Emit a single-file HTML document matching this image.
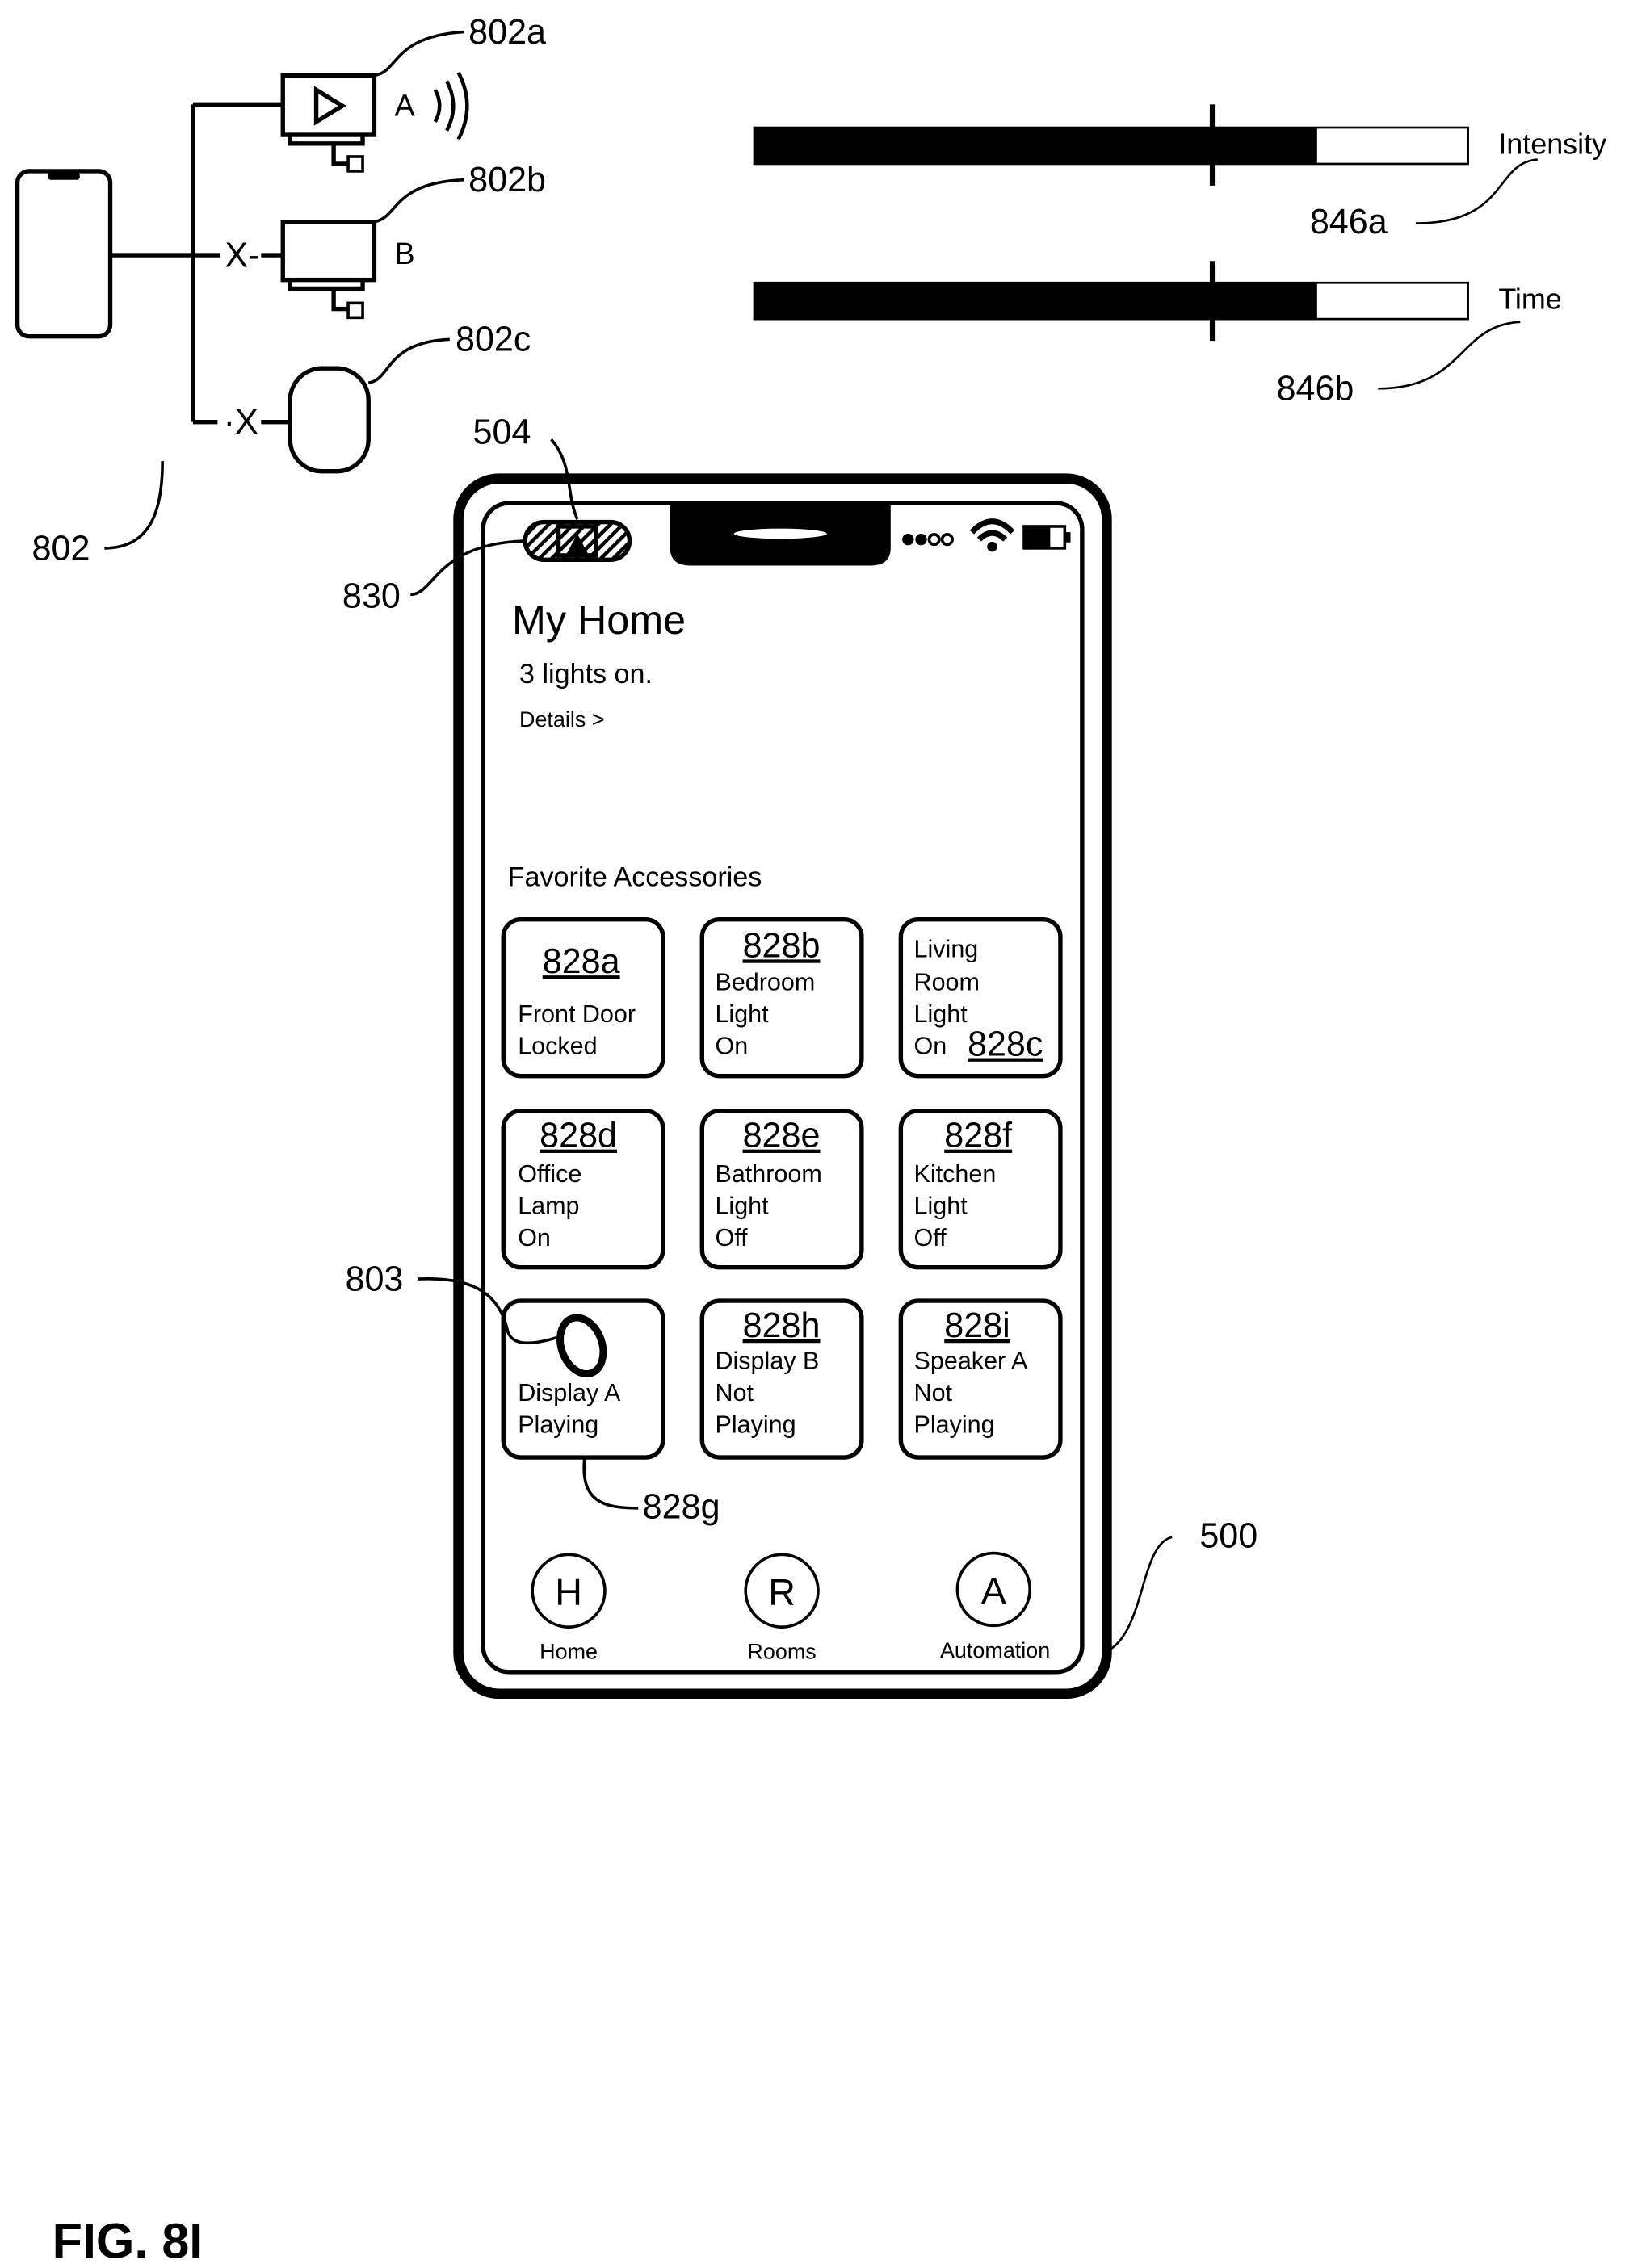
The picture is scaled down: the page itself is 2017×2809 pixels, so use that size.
<!DOCTYPE html>
<html><head><style>
html,body{margin:0;padding:0;background:#fff;}
svg{display:block;}
text{font-family:"Liberation Sans",sans-serif;fill:#000;}
</style></head><body>
<svg width="2017" height="2809" viewBox="0 0 1123 1564" xmlns="http://www.w3.org/2000/svg">
<defs>
<pattern id="h" width="6" height="6" patternUnits="userSpaceOnUse" patternTransform="rotate(45)">
<rect width="6" height="6" fill="#fff"/><rect width="2.5" height="6" fill="#000"/></pattern>
</defs>
<g fill="none" stroke="#000" stroke-width="3">
<rect x="12" y="118" width="64" height="114" rx="8"/>
<line x1="76" y1="176" x2="133" y2="176"/>
<line x1="133" y1="72" x2="133" y2="291"/>
<line x1="133" y1="72" x2="195" y2="72"/>
<line x1="133" y1="176" x2="152" y2="176"/>
<line x1="180" y1="176" x2="195" y2="176"/>
<line x1="133" y1="291" x2="150" y2="291"/>
<line x1="180" y1="291" x2="200" y2="291"/>
<rect x="195" y="52" width="63" height="41"/>
<path d="M200 93 v6 h50 v-6"/>
<path d="M230 99 v14 h10"/>
<rect x="240" y="108" width="10" height="10" stroke-width="2"/>
<path d="M218 62 L236 73 L218 84 Z"/>
<path d="M300 62 q6 11 0 22 M308 56 q9 17 0 34 M316 50 q12 23 0 46" stroke-width="2.5"/>
<rect x="195" y="153" width="63" height="40"/>
<path d="M200 193 v6 h50 v-6"/>
<path d="M230 199 v14 h10"/>
<rect x="240" y="209" width="10" height="10" stroke-width="2"/>
<rect x="200" y="254" width="54" height="71" rx="22"/>
<path d="M258 52 C275 50 270 25 320 22" stroke-width="2"/>
<path d="M258 153 C275 150 270 126 320 124" stroke-width="2"/>
<path d="M254 264 C270 262 265 236 310 234" stroke-width="2"/>
<path d="M72 378 C105 378 112 350 112 318" stroke-width="2"/>
<rect x="520" y="88" width="492" height="25" stroke-width="1.5"/>
<rect x="520" y="195" width="492" height="25" stroke-width="1.5"/>
<line x1="836" y1="72" x2="836" y2="128" stroke-width="4"/>
<line x1="836" y1="180" x2="836" y2="235" stroke-width="4"/>
<path d="M976 154 C1040 154 1030 112 1060 110" stroke-width="1.5"/>
<path d="M950 268 C1010 268 1005 224 1048 222" stroke-width="1.5"/>
<rect x="316" y="330" width="447" height="838" rx="28" stroke-width="7"/>
<rect x="333" y="347" width="413" height="806" rx="18"/>
<path d="M380 303 C395 320 390 340 398 358" stroke-width="2"/>
<path d="M283 410 C300 410 300 375 362 373" stroke-width="2"/>
<path d="M760 1140 C790 1130 785 1065 808 1060" stroke-width="1.5"/>
<rect x="347" y="634" width="110" height="108" rx="12"/>
<rect x="484" y="634" width="110" height="108" rx="12"/>
<rect x="621" y="634" width="110" height="108" rx="12"/>
<rect x="347" y="766" width="110" height="108" rx="12"/>
<rect x="484" y="766" width="110" height="108" rx="12"/>
<rect x="621" y="766" width="110" height="108" rx="12"/>
<rect x="347" y="897" width="110" height="108" rx="12"/>
<rect x="484" y="897" width="110" height="108" rx="12"/>
<rect x="621" y="897" width="110" height="108" rx="12"/>
<path d="M288 882 C330 880 345 895 350 918 C352 925 360 930 385 922" stroke-width="2"/>
<ellipse cx="401" cy="928" rx="14" ry="20" transform="rotate(-20 401 928)" stroke-width="5"/>
<path d="M403 1005 C400 1035 415 1040 440 1040" stroke-width="2"/>
<circle cx="392" cy="1097" r="25" stroke-width="2"/>
<circle cx="539" cy="1097" r="25" stroke-width="2"/>
<circle cx="685" cy="1096" r="25" stroke-width="2"/>
</g>
<rect x="33" y="119" width="22" height="5" rx="2" fill="#000"/>
<rect x="520" y="88" width="388" height="25" fill="#000"/>
<rect x="520" y="195" width="388" height="25" fill="#000"/>
<path d="M462 347 H614 V378 Q614 390 600 390 H476 Q462 390 462 378 Z" fill="#000"/>
<ellipse cx="538" cy="368" rx="32" ry="3.5" fill="#fff"/>
<rect x="362" y="360" width="72" height="26" rx="13" fill="url(#h)" stroke="#000" stroke-width="3"/>
<rect x="385" y="363" width="26" height="20" fill="none" stroke="#000" stroke-width="3"/>
<path d="M390 383 L398 368 L406 383 Z" fill="#000"/>
<circle cx="626" cy="372" r="4" fill="#000"/>
<circle cx="635" cy="372" r="4" fill="#000"/>
<circle cx="644" cy="372" r="3.5" fill="none" stroke="#000" stroke-width="2"/>
<circle cx="653" cy="372" r="3.5" fill="none" stroke="#000" stroke-width="2"/>
<path d="M670 367 Q684 352 698 367 M675 372 Q684 363 693 372" fill="none" stroke="#000" stroke-width="4"/>
<circle cx="684" cy="377" r="3.5" fill="#000"/>
<rect x="706" y="363" width="28" height="15" fill="none" stroke="#000" stroke-width="2"/>
<rect x="706" y="363" width="18" height="15" fill="#000"/>
<rect x="734" y="367" width="4" height="7" fill="#000"/>
<g font-size="24">
<text x="323" y="30">802a</text>
<text x="323" y="132">802b</text>
<text x="314" y="242">802c</text>
<text x="22" y="386">802</text>
<text x="272" y="80" font-size="21">A</text>
<text x="272" y="182" font-size="21">B</text>
<text x="155" y="184">X-</text>
<text x="154" y="299">·X</text>
<text x="903" y="161">846a</text>
<text x="880" y="276">846b</text>
<text x="326" y="306">504</text>
<text x="236" y="419">830</text>
<text x="238" y="890">803</text>
<text x="443" y="1047">828g</text>
<text x="827" y="1067">500</text>
</g>
<text x="1033" y="106" font-size="20">Intensity</text>
<text x="1033" y="213" font-size="20">Time</text>
<text x="353" y="437" font-size="28">My Home</text>
<text x="358" y="471" font-size="19">3 lights on.</text>
<text x="358" y="501" font-size="15">Details &gt;</text>
<text x="350" y="611" font-size="19">Favorite Accessories</text>
<g font-size="17">
<text x="374" y="671" font-size="24" text-decoration="underline">828a</text>
<text x="357" y="705">Front Door</text><text x="357" y="727">Locked</text>
<text x="512" y="660" font-size="24" text-decoration="underline">828b</text>
<text x="493" y="683">Bedroom</text><text x="493" y="705">Light</text><text x="493" y="727">On</text>
<text x="630" y="660">Living</text><text x="630" y="683">Room</text><text x="630" y="705">Light</text><text x="630" y="727">On</text>
<text x="667" y="728" font-size="24" text-decoration="underline">828c</text>
<text x="372" y="791" font-size="24" text-decoration="underline">828d</text>
<text x="357" y="815">Office</text><text x="357" y="837">Lamp</text><text x="357" y="859">On</text>
<text x="512" y="791" font-size="24" text-decoration="underline">828e</text>
<text x="493" y="815">Bathroom</text><text x="493" y="837">Light</text><text x="493" y="859">Off</text>
<text x="651" y="791" font-size="24" text-decoration="underline">828f</text>
<text x="630" y="815">Kitchen</text><text x="630" y="837">Light</text><text x="630" y="859">Off</text>
<text x="357" y="966">Display A</text><text x="357" y="988">Playing</text>
<text x="512" y="922" font-size="24" text-decoration="underline">828h</text>
<text x="493" y="944">Display B</text><text x="493" y="966">Not</text><text x="493" y="988">Playing</text>
<text x="651" y="922" font-size="24" text-decoration="underline">828i</text>
<text x="630" y="944">Speaker A</text><text x="630" y="966">Not</text><text x="630" y="988">Playing</text>
</g>
<g font-size="26" text-anchor="middle">
<text x="392" y="1107">H</text><text x="539" y="1107">R</text><text x="685" y="1106">A</text>
</g>
<g font-size="15" text-anchor="middle">
<text x="392" y="1144">Home</text><text x="539" y="1144">Rooms</text><text x="686" y="1143">Automation</text>
</g>
<text x="36" y="1557" font-size="34" font-weight="bold">FIG. 8I</text>
</svg>
</body></html>
